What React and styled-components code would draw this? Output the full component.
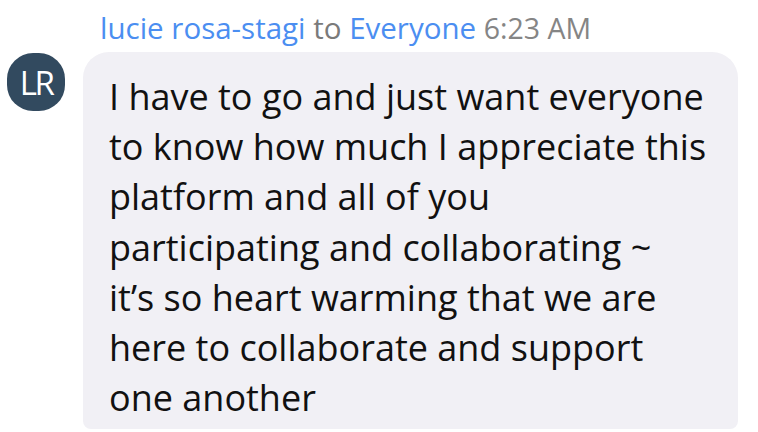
import * as React from "react";
import styled, { createGlobalStyle } from "styled-components";

const GlobalStyle = createGlobalStyle`
  html, body {
    margin: 0;
    padding: 0;
    background: #ffffff;
  }
  body {
    font-family: "Open Sans", "Liberation Sans", sans-serif;
  }
`;

const lines = [
  "I have to go and just want everyone",
  "to know how much I appreciate this",
  "platform and all of you",
  "participating and collaborating ~",
  "it\u2019s so heart warming that we are",
  "here to collaborate and support",
  "one another",
];

export default function App() {
  return (
    <>
      <GlobalStyle />
      <Container>
        <Header>
          <Name>lucie rosa-stagi</Name> <To>to</To> <Name>Everyone</Name>{" "}
          <Time>6:23 AM</Time>
        </Header>
        <Row>
          <Avatar>LR</Avatar>
          <Bubble>
            {lines.map((l, i) => (
              <Line key={i}>{l}</Line>
            ))}
          </Bubble>
        </Row>
      </Container>
    </>
  );
}

const Container = styled.div`
  width: 758px;
  height: 432px;
  overflow: hidden;
  padding: 8px 20px 0 7px;
  box-sizing: border-box;
`;

const Header = styled.div`
  padding-left: 93px;
  height: 44px;
  font-size: 29.5px;
  line-height: 40px;
  white-space: nowrap;
`;

const Name = styled.span`
  color: #4b8ef1;
`;

const To = styled.span`
  color: #7a7a7a;
`;

const Time = styled.span`
  color: #858585;
  font-size: 28.5px;
`;

const Row = styled.div`
  display: flex;
  align-items: flex-start;
  gap: 18px;
`;

const Avatar = styled.div`
  flex: none;
  width: 58px;
  height: 58px;
  margin-top: 1px;
  border-radius: 45%;
  background: #324a5f;
  color: #ffffff;
  display: flex;
  align-items: center;
  justify-content: center;
  font-size: 33px;
  letter-spacing: -2.5px;
`;

const Bubble = styled.div`
  flex: 1;
  box-sizing: border-box;
  height: 377px;
  background: #f1f0f5;
  border-radius: 26px 26px 8px 8px;
  padding: 20px 20px 0 26px;
`;

const Line = styled.div`
  font-size: 36px;
  line-height: 50.2px;
  color: #111111;
  white-space: nowrap;
`;
